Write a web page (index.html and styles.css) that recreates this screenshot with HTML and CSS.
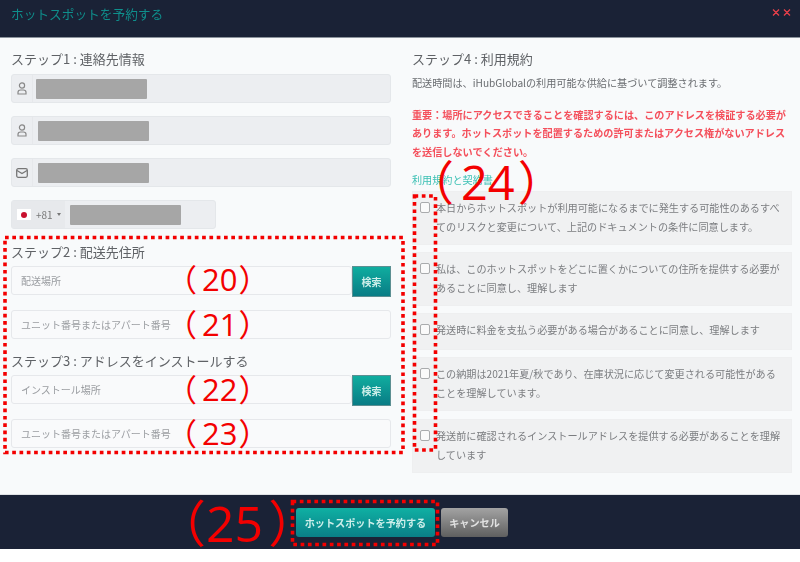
FILE: index.html
```html
<!DOCTYPE html>
<html lang="ja">
<head>
<meta charset="utf-8">
<title>ホットスポットを予約する</title>
<link rel="stylesheet" href="styles.css">
</head>
<body>
<div class="modal">
  <header class="modal-head">
    <h1>ホットスポットを予約する</h1>
    <div class="close">
      <svg class="close-icon" width="22" height="10" viewBox="0 0 22 10"><path d="M2 1.5l6 6M8 1.5l-6 6M13 1.5l6 6M19 1.5l-6 6" stroke="#e8404a" stroke-width="1.3" fill="none"/></svg>
    </div>
  </header>
  <main class="modal-body">
    <section class="col left">
      <h2>ステップ1 : 連絡先情報</h2>
      <div class="group">
        <span class="addon"><svg width="10" height="13" viewBox="0 0 10 13"><circle cx="5" cy="3.5" r="2.6" fill="none" stroke="#888" stroke-width="1.2"/><path d="M1 12V10.2C1 8.8 2.2 8 3.5 8h3C7.8 8 9 8.8 9 10.2V12z" fill="none" stroke="#888" stroke-width="1.2"/></svg></span>
        <span class="redact r1"></span>
      </div>
      <div class="group">
        <span class="addon"><svg width="10" height="13" viewBox="0 0 10 13"><circle cx="5" cy="3.5" r="2.6" fill="none" stroke="#888" stroke-width="1.2"/><path d="M1 12V10.2C1 8.8 2.2 8 3.5 8h3C7.8 8 9 8.8 9 10.2V12z" fill="none" stroke="#888" stroke-width="1.2"/></svg></span>
        <span class="redact"></span>
      </div>
      <div class="group">
        <span class="addon"><svg width="12" height="10" viewBox="0 0 12 10"><rect x=".7" y=".7" width="10.6" height="8.6" rx="1.5" fill="none" stroke="#777" stroke-width="1.3"/><path d="M1 2.5l5 3 5-3" fill="none" stroke="#777" stroke-width="1.3"/></svg></span>
        <span class="redact"></span>
      </div>
      <div class="group phone">
        <span class="dial">
          <span class="flag"><i></i></span>
          <span class="code">+81</span>
          <span class="caret"></span>
        </span>
        <span class="redact"></span>
      </div>
      <h2 class="step2">ステップ2 : 配送先住所</h2>
      <div class="search-row">
        <div class="field">配送場所</div>
        <button class="search">検索</button>
      </div>
      <div class="field unit">ユニット番号またはアパート番号</div>
      <h2 class="step3">ステップ3 : アドレスをインストールする</h2>
      <div class="search-row">
        <div class="field">インストール場所</div>
        <button class="search">検索</button>
      </div>
      <div class="field unit">ユニット番号またはアパート番号</div>
    </section>
    <section class="col right">
      <h2>ステップ4 : 利用規約</h2>
      <p class="note">配送時間は、iHubGlobalの利用可能な供給に基づいて調整されます。</p>
      <p class="warn">重要：場所にアクセスできることを確認するには、このアドレスを検証する必要があります。ホットスポットを配置するための許可またはアクセス権がないアドレスを送信しないでください。</p>
      <a class="terms">利用規約と契約書</a>
      <label class="agree"><span class="check"></span><span>本日からホットスポットが利用可能になるまでに発生する可能性のあるすべてのリスクと変更について、上記のドキュメントの条件に同意します。</span></label>
      <label class="agree"><span class="check"></span><span>私は、このホットスポットをどこに置くかについての住所を提供する必要があることに同意し、理解します</span></label>
      <label class="agree single"><span class="check"></span><span>発送時に料金を支払う必要がある場合があることに同意し、理解します</span></label>
      <label class="agree"><span class="check"></span><span>この納期は2021年夏/秋であり、在庫状況に応じて変更される可能性があることを理解しています。</span></label>
      <label class="agree last"><span class="check"></span><span>発送前に確認されるインストールアドレスを提供する必要があることを理解しています</span></label>
    </section>
  </main>
  <footer class="modal-foot">
    <button class="primary">ホットスポットを予約する</button>
    <button class="cancel">キャンセル</button>
  </footer>
</div>
<div class="notes">
  <span class="mark m20">（<b>20</b>）</span>
  <span class="mark m21">（<b>21</b>）</span>
  <span class="mark m22">（<b>22</b>）</span>
  <span class="mark m23">（<b>23</b>）</span>
  <span class="mark big m24">（<b>24</b>）</span>
  <span class="mark big m25">（<b>25</b>）</span>
  <svg class="dots" width="800" height="562" viewBox="0 0 800 562">
    <rect x="5" y="237.5" width="398" height="215"/>
    <rect x="414.5" y="196" width="21" height="254"/>
    <rect x="292.5" y="501.5" width="145" height="43"/>
  </svg>
</div>
</body>
</html>
```
FILE: styles.css
```css
* { box-sizing: border-box; }
html, body { margin: 0; padding: 0; background: #fff; }
body {
  position: relative;
  width: 800px;
  height: 562px;
  overflow: hidden;
  font-family: "Noto Sans CJK JP", "Noto Sans", sans-serif;
}
.modal {
  height: 549px;
  display: flex;
  flex-direction: column;
  filter: blur(.35px);
}
.modal-head {
  height: 38px;
  flex: none;
  background: #1a2236;
  border-bottom: 1px solid #8b939c;
  display: flex;
  justify-content: space-between;
  padding: 4px 7px 0 11px;
}
.modal-head h1 {
  margin: 0;
  font-size: 12.7px;
  line-height: 20px;
  font-weight: 400;
  color: #0f8f8c;
}
.close { padding-top: 4px; }
.close-icon { display: block; }
.modal-body {
  flex: 1;
  background: #f8fafb;
  display: flex;
  gap: 21px;
  padding: 11px 8px 0 11px;
}
.col { width: 380px; flex: none; }
h2 {
  margin: 0;
  font-size: 13px;
  line-height: 19px;
  font-weight: 400;
  color: #5f6266;
}
.left h2 { margin-bottom: 5px; }
.left > h2:first-child { margin-bottom: 6px; }
.group {
  height: 29px;
  margin-bottom: 13px;
  display: flex;
  align-items: center;
  background: #eceef1;
  border: 1px solid #e4e7ea;
  border-radius: 3px;
}
.addon {
  width: 21px;
  height: 27px;
  flex: none;
  display: flex;
  align-items: center;
  justify-content: center;
  border-right: 1px solid #e6e8eb;
}
.redact {
  width: 111px;
  height: 20px;
  margin-left: 5px;
  background: #a6a6a6;
  border-radius: 1px;
}
.r1 { margin-left: 3px; }
.phone { width: 205px; margin-bottom: 0; }
.dial {
  width: 53px;
  height: 27px;
  flex: none;
  display: flex;
  align-items: center;
  background: #e7e9ec;
  padding-left: 5px;
}
.flag {
  width: 14px;
  height: 11px;
  background: #fff;
  display: flex;
  align-items: center;
  justify-content: center;
}
.flag i {
  width: 6px;
  height: 6px;
  border-radius: 50%;
  background: #c8102e;
}
.code {
  margin-left: 5px;
  font-size: 10px;
  color: #777;
}
.caret {
  margin-left: 4px;
  border: 2.5px solid transparent;
  border-top: 3px solid #777;
  border-bottom: 0;
}
.dial + .redact { margin-left: 5px; }
.step2 { margin-top: 13px; }
.step3 { margin-top: 12px; }
.search-row { display: flex; align-items: flex-start; }
.field {
  flex: 1;
  height: 29px;
  padding-left: 9px;
  font-size: 10px;
  line-height: 27px;
  color: #9a9da1;
  background: #f9fafb;
  border: 1px solid #e6e8eb;
  border-radius: 3px;
}
.unit { margin: 13px 0 0; }
.search {
  width: 39px;
  height: 31px;
  flex: none;
  padding: 0;
  border: 1px solid #5c8f92;
  font: 700 10px "Noto Sans CJK JP", sans-serif;
  color: #cdeee9;
  background: linear-gradient(#10ad9f, #097c85);
}
.right h2 { margin-bottom: 6px; }
.note, .warn {
  margin: 0;
  font-size: 10.15px;
  line-height: 18.5px;
}
.note { color: #696c70; }
.warn {
  margin-top: 13px;
  width: 380px;
  font-weight: 700;
  color: #f4505c;
}
.terms {
  display: block;
  margin: 10px 0 2px;
  font-size: 10.15px;
  line-height: 18px;
  color: #3cc0b4;
}
.agree {
  display: flex;
  gap: 6px;
  min-height: 54px;
  margin-bottom: 7px;
  padding: 7.4px 10px 7.4px 7px;
  background: #f0f1f2;
  border: 1px solid #eeeff0;
  font-size: 10.15px;
  line-height: 18.6px;
  color: #7b7d80;
}
.single { min-height: 37px; }
.last { margin-top: 8px; }
.check {
  width: 10px;
  height: 11px;
  flex: none;
  margin-top: 3px;
  background: #fafafa;
  border: 1px solid #a9abad;
  border-radius: 2px;
}
.modal-foot {
  height: 55px;
  flex: none;
  background: #1a2236;
  border-top: 1px solid #dfe2e5;
  display: flex;
  gap: 6px;
  padding: 13px 0 0 296px;
}
.primary, .cancel {
  height: 29px;
  padding: 0;
  border: 0;
  border-radius: 3px;
  font: 700 10.15px "Noto Sans CJK JP", sans-serif;
  color: #cdeeea;
}
.primary {
  width: 139px;
  background: linear-gradient(#0fb0a3, #0a7f87);
}
.cancel {
  width: 67px;
  color: #e2e2e2;
  background: linear-gradient(#a3a3a3, #5f5f5f);
}
.notes {
  position: absolute;
  inset: 0;
  pointer-events: none;
}
.mark {
  position: absolute;
  font-size: 31px;
  line-height: 40px;
  color: #f30000;
  white-space: nowrap;
}
.mark b {
  font-family: "Open Sans", "Noto Sans", sans-serif;
  font-weight: 400;
  margin: 0 1px 0 5px;
}
.m20 { left: 166px; top: 258px; }
.m21 { left: 166px; top: 303px; }
.m22 { left: 166px; top: 368px; }
.m23 { left: 166px; top: 412px; }
.big { font-size: 47px; line-height: 56px; }
.big b { margin: 0 3px 0 7px; }
.m24 { left: 407px; top: 152px; }
.m25 { left: 156px; top: 492px; font-size: 50px; }
.m25 b { margin: 0 5px 0 0; }
.dots {
  position: absolute;
  left: 0;
  top: 0;
}
.dots rect {
  fill: none;
  stroke: #f30000;
  stroke-width: 3.6px;
  stroke-dasharray: 3.7 3.6;
}
```
